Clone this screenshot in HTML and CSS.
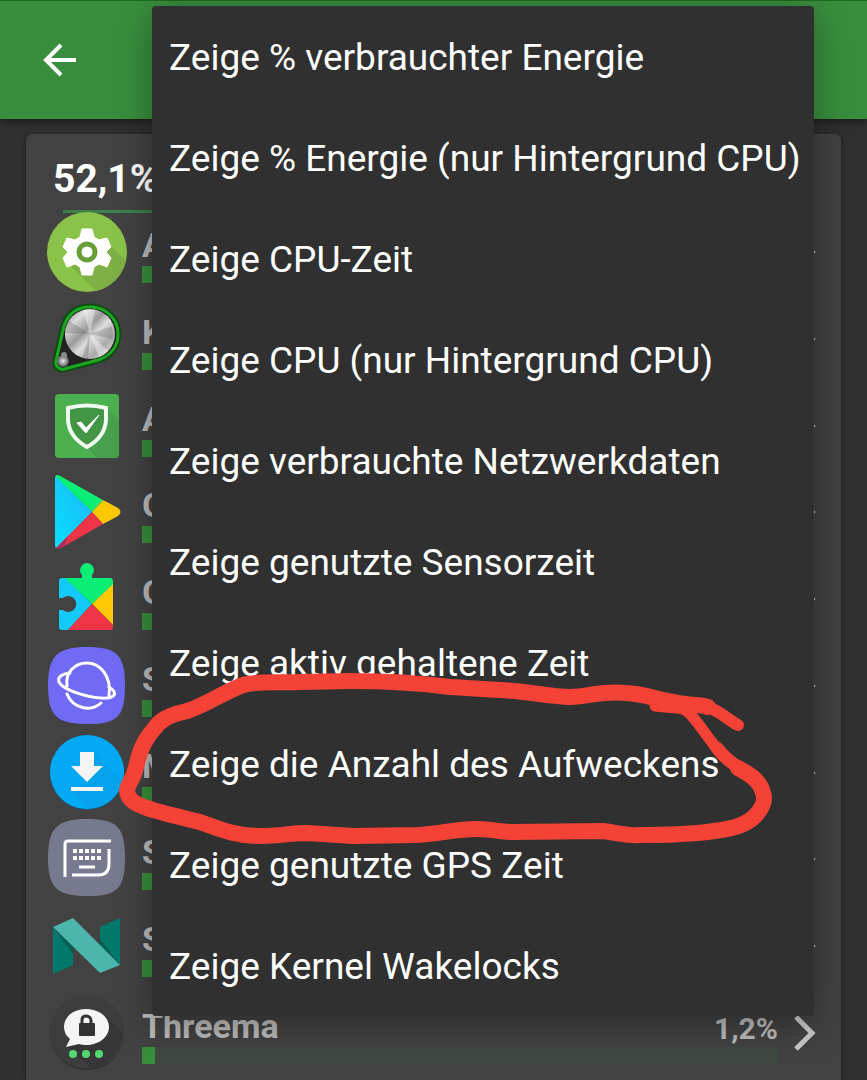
FILE: index.html
```html
<!DOCTYPE html>
<html lang="de">
<head>
<meta charset="utf-8">
<meta name="viewport" content="width=device-width, initial-scale=1">
<title>Akkuverbrauch</title>
<link rel="stylesheet" href="styles.css">
</head>
<body>
<div class="screen">
  <header class="toolbar">
    <button class="back" type="button" aria-label="Zurück">
      <svg width="36" height="36" viewBox="0 0 36 36"><path d="M34 18H4M19 3L4 18l15 15" fill="none" stroke="#fff" stroke-width="4"/></svg>
    </button>
  </header>

  <main class="card">
    <h1 class="total">52,1%</h1>
    <hr class="rule">
    <ul class="apps">
      <li class="app">
        <svg class="icon" viewBox="0 0 80 80">
          <circle cx="40" cy="40" r="40" fill="#8bc34a"/>
          <path d="M60 30L79 49A40 40 0 0 1 49 79L24 54Z" fill="#7eb045"/>
          <path d="M35 17h10l2 8 5 3 8-2 4 9-5 5 5 6-4 9-8-3-5 3-2 8H35l-2-8-5-3-8 3-4-9 5-6-5-5 4-9 8 2 5-3Z" fill="#fff" stroke="#fff" stroke-width="1" stroke-linejoin="round"/>
          <circle cx="40" cy="40" r="8" fill="#fff" stroke="#689f38" stroke-width="5"/>
        </svg>
        <div class="info"><span class="name">A</span><div class="track"><div class="fill"></div></div></div>
        <svg class="chevron" viewBox="0 0 24 40"><path d="M3 4l16 16L3 36"/></svg>
      </li>
      <li class="app">
        <svg class="icon" viewBox="0 0 80 80">
          <defs>
            <linearGradient id="metal" x1="0" y1="0" x2="1" y2="1"><stop offset="0" stop-color="#777"/><stop offset=".22" stop-color="#ddd"/><stop offset=".42" stop-color="#999"/><stop offset=".55" stop-color="#ddd"/><stop offset=".75" stop-color="#aaa"/><stop offset="1" stop-color="#f0f0f0"/></linearGradient>
            <radialGradient id="ball"><stop offset="0" stop-color="#eee"/><stop offset="1" stop-color="#555"/></radialGradient>
          </defs>
          <path d="M16 26C21 12 31 7 43 7c17 0 29 13 29 28 0 13-8 23-20 27L17 71c-6 1-10-3-9-9Z" fill="#222" stroke="#124a14" stroke-width="5"/>
          <path d="M17 27C22 13 31 8 43 8c16 0 28 12 28 27 0 13-8 22-20 26L17 70c-5 1-9-3-8-8Z" fill="#222" stroke="#1aa821" stroke-width="3"/>
          <circle cx="43" cy="35" r="25" fill="url(#metal)"/>
          <path d="M43 35L21 21l-3 13ZM43 35l22-8 1 13ZM43 35L35 59l6 1Z" fill="#666" opacity=".3"/>
          <path d="M43 35L36 11l12 0ZM43 35l18 17-9 6Z" fill="#fff" opacity=".4"/>
          <circle cx="16" cy="62" r="6" fill="url(#ball)"/>
          <circle cx="17" cy="56" r="3" fill="#888"/>
        </svg>
        <div class="info"><span class="name">K</span><div class="track"><div class="fill"></div></div></div>
        <svg class="chevron" viewBox="0 0 24 40"><path d="M3 4l16 16L3 36"/></svg>
      </li>
      <li class="app">
        <svg class="icon" viewBox="0 0 80 80">
          <rect x="8" y="8" width="64" height="64" rx="4" fill="#4caf50"/>
          <path d="M60 22l12 12v34q0 4-4 4H50L40 62Z" fill="#47a04b"/>
          <path d="M21 22q19-5 38 0v12q-1 17-19 27Q22 51 21 34Z" fill="#439646" stroke="#f0fbef" stroke-width="4"/>
          <path d="M30 37l4-1 5 6 13-13-13 18Z" fill="#fff" stroke="#fff"/>
        </svg>
        <div class="info"><span class="name">A</span><div class="track"><div class="fill"></div></div></div>
        <svg class="chevron" viewBox="0 0 24 40"><path d="M3 4l16 16L3 36"/></svg>
      </li>
      <li class="app">
        <svg class="icon" viewBox="0 0 80 80">
          <defs>
            <clipPath id="play"><path d="M8 7q0-6 6-3l57 32q5 4 0 8L14 76q-6 2-6-3Z"/></clipPath>
            <linearGradient id="cyan" x1="1" y1="0" x2="0" y2="1"><stop offset="0" stop-color="#1cb6f6"/><stop offset="1" stop-color="#08e0ff"/></linearGradient>
          </defs>
          <g clip-path="url(#play)">
            <path d="M8 2l37 38L8 78Z" fill="url(#cyan)"/>
            <path d="M8 1l48 27-11 12L9 5Z" fill="#0bee76"/>
            <path d="M56 28l24 12-24 12-11-12Z" fill="#ffc805"/>
            <path d="M45 40l11 12L8 80v-3Z" fill="#ee3548"/>
            <path d="M9 76l12-12-3 10-9 5Z" fill="#a9305c"/>
          </g>
        </svg>
        <div class="info"><span class="name">G</span><div class="track"><div class="fill"></div></div></div>
        <svg class="chevron" viewBox="0 0 24 40"><path d="M3 4l16 16L3 36"/></svg>
      </li>
      <li class="app">
        <svg class="icon" viewBox="0 0 80 80">
          <defs><clipPath id="piece"><path d="M15 19h20v-3a7 7 0 1 1 10 0v3h18q3 0 3 3v46q0 3-3 3H15q-3 0-3-3V51h4a8 8 0 1 0 0-12h-4V22q0-3 3-3Z"/></clipPath></defs>
          <g clip-path="url(#piece)">
            <path d="M10 19h9l26 26-25 27H10Z" fill="#12c9fa"/>
            <path d="M18 19V0h50v24L45 45Z" fill="#0bee76"/>
            <path d="M67 24v43L45 45Z" fill="#ffc805"/>
            <path d="M20 72l25-27 22 22v5Z" fill="#ee3548"/>
          </g>
        </svg>
        <div class="info"><span class="name">G</span><div class="track"><div class="fill"></div></div></div>
        <svg class="chevron" viewBox="0 0 24 40"><path d="M3 4l16 16L3 36"/></svg>
      </li>
      <li class="app">
        <svg class="icon" viewBox="0 0 80 80">
          <path d="M40 1C70 1 78 9 78 40S70 78 40 78 1 70 1 40 10 1 40 1Z" fill="#716af5"/>
          <g fill="none" stroke="#fff" stroke-width="3" stroke-linecap="round">
            <path d="M20 40C18 26 28 17 40 17s25 12 22 33"/>
            <path d="M23 27c-8 1-13 4-11 9 4 8 27 15 42 16 14 1 18-5 8-11"/>
            <path d="M20 48c6 15 24 18 34 9"/>
          </g>
        </svg>
        <div class="info"><span class="name">S</span><div class="track"><div class="fill"></div></div></div>
        <svg class="chevron" viewBox="0 0 24 40"><path d="M3 4l16 16L3 36"/></svg>
      </li>
      <li class="app">
        <svg class="icon" viewBox="0 0 80 80">
          <circle cx="40" cy="40" r="37" fill="#175a7d"/>
          <circle cx="40" cy="39" r="37" fill="#03a9f4"/>
          <path d="M47 19l26 27Q67 73 41 76L24 58l16-9Z" fill="#0796d8" opacity=".3"/>
          <path d="M33 19h14v14h9L40 49 24 33h9ZM24 54h32v4H24Z" fill="#f5f5f5"/>
        </svg>
        <div class="info"><span class="name">M</span><div class="track"><div class="fill"></div></div></div>
        <svg class="chevron" viewBox="0 0 24 40"><path d="M3 4l16 16L3 36"/></svg>
      </li>
      <li class="app">
        <svg class="icon" viewBox="0 0 80 80">
          <path d="M40 0C70 0 78 8 78 39S70 77 40 77 1 69 1 39 10 0 40 0Z" fill="#777a8f"/>
          <path d="M18 58V25q0-3 3-3h43M62 30v15q0 11-11 11H25" fill="none" stroke="#fff" stroke-width="3"/>
          <path d="M26 32h29M26 39h29" stroke="#fff" stroke-width="4" stroke-dasharray="4 2"/>
          <path d="M32 48h16" stroke="#fff" stroke-width="3"/>
        </svg>
        <div class="info"><span class="name">S</span><div class="track"><div class="fill"></div></div></div>
        <svg class="chevron" viewBox="0 0 24 40"><path d="M3 4l16 16L3 36"/></svg>
      </li>
      <li class="app">
        <svg class="icon" viewBox="0 0 80 80">
          <path d="M6 21l20 20v18L6 68ZM53 21l20-9v47L53 43Z" fill="#00796b"/>
          <path d="M6 21l20 27v-8ZM73 59L53 33v10Z" fill="#075c52"/>
          <path d="M6 21l20-9 47 47-20 8Z" fill="#4db6ac"/>
        </svg>
        <div class="info"><span class="name">S</span><div class="track"><div class="fill"></div></div></div>
        <svg class="chevron" viewBox="0 0 24 40"><path d="M3 4l16 16L3 36"/></svg>
      </li>
      <li class="app">
        <svg class="icon" viewBox="0 0 80 80">
          <circle cx="40" cy="40" r="37" fill="#2c2c2c"/>
          <circle cx="40" cy="39" r="37" fill="#3d3d3d"/>
          <path d="M58 23l18 18Q70 68 45 76L20 54Z" fill="#363636"/>
          <path d="M39 16c13 0 23 8 23 18s-10 18-23 18q-4 0-7-1l-13 3 4-8q-6-5-6-12c0-10 9-18 22-18Z" fill="#f5f5f5"/>
          <rect x="32" y="30" width="16" height="13" rx="1" fill="#333"/>
          <path d="M35 31v-4q0-4 4-4t5 4v4" fill="none" stroke="#333" stroke-width="3"/>
          <g fill="#51d872"><circle cx="26" cy="61" r="4"/><circle cx="39" cy="61" r="4"/><circle cx="52" cy="61" r="4"/></g>
        </svg>
        <div class="info"><div class="line"><span class="name">Threema</span><span class="percent">1,2%</span></div><div class="track"><div class="fill"></div></div></div>
        <svg class="chevron" viewBox="0 0 24 40"><path d="M3 4l16 16L3 36"/></svg>
      </li>
    </ul>
  </main>

  <div class="menu" role="menu">
    <button class="item" type="button" role="menuitem">Zeige % verbrauchter Energie</button>
    <button class="item" type="button" role="menuitem">Zeige % Energie (nur Hintergrund CPU)</button>
    <button class="item" type="button" role="menuitem">Zeige CPU-Zeit</button>
    <button class="item" type="button" role="menuitem">Zeige CPU (nur Hintergrund CPU)</button>
    <button class="item" type="button" role="menuitem">Zeige verbrauchte Netzwerkdaten</button>
    <button class="item" type="button" role="menuitem">Zeige genutzte Sensorzeit</button>
    <button class="item" type="button" role="menuitem">Zeige aktiv gehaltene Zeit</button>
    <button class="item" type="button" role="menuitem">Zeige die Anzahl des Aufweckens</button>
    <button class="item" type="button" role="menuitem">Zeige genutzte GPS Zeit</button>
    <button class="item" type="button" role="menuitem">Zeige Kernel Wakelocks</button>
  </div>

  <svg class="marker" width="660" height="180" viewBox="115 670 660 180" aria-hidden="true">
    <g fill="none" stroke="#f44336" stroke-linecap="round" stroke-linejoin="round">
      <path stroke-width="12" d="M738 725C728 720 721 711 707 707"/>
      <path stroke-width="16" d="M708 707C702 704 690 706 674 702C656 700 647 694 626 693C602 690 589 697 570 697C551 697 527 691 500 690C482 689 470 688 450 687C420 683 390 681 350 681L300 682C275 683 257 681 243 685C220 694 206 705 187 711C169 715 160 720 154 729C138 747 138 763 134 774C130 784 124 789 129 797C134 807 160 812 200 822C217 828 234 836 260 836C280 836 291 833 307 833L353 836L417 835C440 834 455 829 477 829C492 829 500 832 513 832L603 831C620 833 627 836 640 835C661 835 690 834 707 832C730 829 742 827 753 818C762 810 766 800 763 793C760 780 749 774 738 768"/>
      <path stroke-width="13" d="M745 771C731 763 725 758 717 748"/>
      <path stroke-width="11" d="M655 706C675 709 682 705 691 715C703 728 709 741 722 754"/>
    </g>
  </svg>
</div>
</body>
</html>
```
FILE: styles.css
```css
* { box-sizing: border-box; }

body {
  margin: 0;
  background: #303030;
  color: #fff;
  font-family: Roboto, "Noto Sans", sans-serif;
}

.screen {
  position: relative;
  display: flex;
  flex-direction: column;
  height: 100vh;
  overflow: hidden;
}

.toolbar {
  flex: none;
  display: flex;
  align-items: center;
  height: 119px;
  padding: 0 42px;
  background: #388e3c;
  border-top: 1px solid #1f6b24;
  box-shadow: 0 2px 8px rgba(0, 0, 0, 0.5);
}

.back {
  display: flex;
  padding: 0;
  border: 0;
  background: none;
}

.card {
  flex: 1 0 auto;
  margin: 15px 26px 0;
  padding: 23px 24px 0 21px;
  background: #424242;
  border-radius: 6px 6px 0 0;
  box-shadow: 0 1px 4px rgba(0, 0, 0, 0.5);
}

.total {
  margin: 0;
  padding-left: 6px;
  font-size: 39px;
  line-height: 44px;
  font-weight: 700;
}

.rule {
  height: 3px;
  margin: 9px 16px 0;
  border: 0;
  background: #3c8147;
}

.apps {
  display: grid;
  grid-template-rows: repeat(10, 1fr);
  height: 867px;
  margin: -4px 0 0;
  padding: 0;
  list-style: none;
}

.app {
  display: flex;
  align-items: center;
  gap: 15px;
}

.icon {
  position: relative;
  flex: none;
  width: 80px;
  height: 80px;
}

.info {
  flex: 1;
  padding-top: 4px;
}

.line {
  display: flex;
  justify-content: space-between;
}

.name {
  display: block;
  color: #bbb;
  font-size: 34px;
  line-height: 41px;
  font-weight: 700;
}

.percent {
  color: #bbb;
  font-size: 30px;
  line-height: 45px;
  height: 41px;
  font-weight: 700;
}

.track {
  height: 17px;
  background: #3f4842;
}

.fill {
  width: 2%;
  height: 100%;
  background: #388e3c;
}

.chevron {
  flex: none;
  width: 24px;
  height: 40px;
  fill: none;
  stroke: #c8c8c8;
  stroke-width: 5;
}

.menu {
  position: absolute;
  top: 6px;
  left: 152px;
  right: 53px;
  display: flex;
  flex-direction: column;
  background: #303030;
  border-radius: 4px;
  box-shadow: 0 8px 36px rgba(0, 0, 0, 0.35);
}

.item {
  height: 101px;
  padding: 3px 16px 0 17px;
  border: 0;
  background: none;
  color: #fff;
  font-family: inherit;
  font-size: 37px;
  line-height: 44px;
  text-align: left;
  white-space: nowrap;
}

.marker {
  position: absolute;
  top: 670px;
  left: 115px;
  pointer-events: none;
}
```
